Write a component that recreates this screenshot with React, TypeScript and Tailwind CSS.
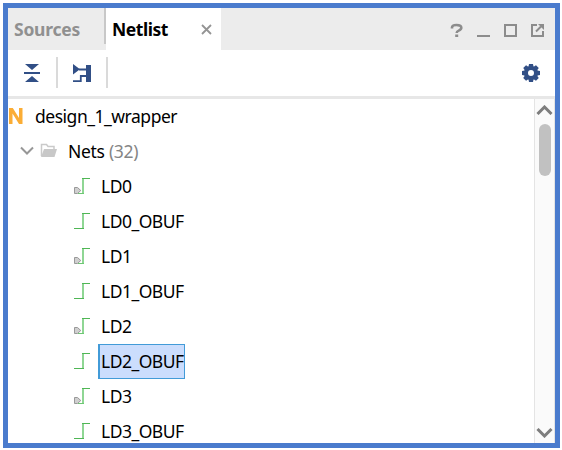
import React from "react";

function NetIcon({ port }: { port: boolean }) {
  return (
    <svg width="18" height="17" viewBox="0 0 18 17" className="shrink-0" shapeRendering="crispEdges">
      <path d="M9 0h2v16H9z" fill="#8fd694" />
      <path d="M9 0h8v1H9zM1 15h10v1H1z" fill="#4fb655" />
      {port && (
        <g shapeRendering="auto">
          <path d="M0 8h9v9H0z" fill="#fff" />
          <path d="M5 15h6v1H5z" fill="#6cc872" />
          <path d="M1.5 9.5h3L7.8 12.5l-3.3 3h-3z" fill="#cfcfcf" stroke="#999" />
        </g>
      )}
    </svg>
  );
}

const nets = ["LD0", "LD0_OBUF", "LD1", "LD1_OBUF", "LD2", "LD2_OBUF", "LD3", "LD3_OBUF"];

function NetRow({ name }: { name: string }) {
  const selected = name === "LD2_OBUF";
  return (
    <div className="flex h-[35px] shrink-0 items-center pl-[65px]">
      <NetIcon port={!name.includes("_")} />
      <span
        className={
          "ml-[7px] flex h-[35px] items-center whitespace-nowrap border pb-[2px] " +
          (name.includes("_") ? "w-[87px] tracking-[-0.52px] " : "tracking-[-0.5px] ") +
          (selected ? "border-[#429bd8] border-l-2 pl-px bg-[#cbddfd]" : "border-transparent pl-[2px]")
        }
      >
        {name}
      </span>
    </div>
  );
}

export default function App() {
  return (
    <div className="h-[450px] w-[562px] overflow-hidden bg-white p-[3px] font-['Noto_Sans',sans-serif] text-[17.5px] leading-[24px] text-black">
      <div className="flex h-[445px] w-[557px] flex-col overflow-hidden border-[5px] border-[#4a7bcd] bg-white">
        <header className="flex h-[42px] shrink-0 bg-[#ececec] font-bold">
          <div className="flex w-[98px] items-start">
            <div className="flex h-[42px] w-[96px] items-center pl-[6px] text-[#909090] tracking-[-0.25px]">Sources</div>
            <div className="h-[36px] w-[2px] bg-[#c8c8c8]" />
          </div>
          <div className="flex w-[115px] items-center bg-white pl-[6px]">
            <span className="w-[89px] tracking-[-0.45px]">Netlist</span>
            <svg width="11" height="11" viewBox="0 0 11 11" fill="none" stroke="#949494" strokeWidth="1.8">
              <path d="M1 1l9 9M10 1L1 10" />
            </svg>
          </div>
          <svg width="110" height="42" viewBox="445 8 110 42" className="ml-auto" fill="none" stroke="#8c8c8c" strokeWidth="2">
            <path d="M452 28.5v-1q0-2.5 4.5-2.5 4.8 0 4.8 2.8 0 1.8-2.6 2.8-2 .8-2 2.4" strokeWidth="2.6" />
            <path d="M455.2 34.5h3v2.5h-3z" fill="#8c8c8c" stroke="none" />
            <path d="M477 35h13v2h-13z" fill="#8c8c8c" stroke="none" />
            <path d="M505 25h11v11h-11z" />
            <path d="M537 25h-5v11h11v-5" />
            <path d="M536 31.5l5-5" />
            <path d="M538 24h6v6z" fill="#8c8c8c" stroke="none" />
          </svg>
        </header>

        <div className="flex h-[46px] shrink-0 items-center">
          <svg width="48" height="46" viewBox="8 50 48 46" fill="#314f86">
            <path d="M25 64h14l-7 6zM24 72h16v2H24zM32 76l7 6H25z" />
          </svg>
          <div className="mt-[-1px] h-[31px] w-[2px] bg-[#dadada]" />
          <svg width="48" height="46" viewBox="58 50 48 46" fill="#314f86">
            <path d="M73 64l7 5.3-7 5.3zM86 65h5v17h-5z" />
            <path d="M79 69.5h8M73 81.2h7.8V76H87" fill="none" stroke="#314f86" strokeWidth="1.8" />
          </svg>
          <div className="mt-[-1px] h-[31px] w-[2px] bg-[#dadada]" />
          <svg width="20" height="20" viewBox="-10 -10 20 20" className="ml-auto mr-[14px]">
            <circle r="5" fill="none" stroke="#314f86" strokeWidth="4" />
            {[0, 45, 90, 135, 180, 225, 270, 315].map((a) => (
              <path key={a} d="M-2-9h4l.7 4h-5.4z" fill="#314f86" transform={`rotate(${a})`} />
            ))}
          </svg>
        </div>
        <div className="h-[3px] shrink-0 bg-[#e7e7e7]" />

        <div className="flex h-[344px] shrink-0">
          <div className="flex h-[344px] min-w-0 flex-1 flex-col overflow-hidden">
            <div className="flex h-[35px] shrink-0 items-center pb-[2px]">
              <svg width="16" height="18" viewBox="0 0 16 18" fill="#fbad35">
                <path d="M1 1h3.8l6.2 10V1h3.5v16H11L4.5 6.5V17H1z" />
              </svg>
              <span className="ml-[11px] whitespace-nowrap tracking-[-0.48px]">design_1_wrapper</span>
            </div>
            <div className="flex h-[35px] shrink-0 items-center pb-[2px] pl-[12px]">
              <svg width="14" height="9" viewBox="0 0 14 9" fill="none" stroke="#979797" strokeWidth="2">
                <path d="M1 1.5l6 6 6-6" />
              </svg>
              <svg width="17" height="15" viewBox="0 0 17 15" className="ml-[6px]">
                <path d="M1.5 13V1.5h5l1.5 2h6V7" fill="none" stroke="#cacaca" strokeWidth="1.5" />
                <path d="M4 6h13l-2.5 8H1z" fill="#c8c8c8" />
              </svg>
              <span className="ml-[11px] whitespace-pre tracking-[-0.3px]">
                Nets <span className="text-[#858585]">(32)</span>
              </span>
            </div>
            {nets.map((n) => (
              <NetRow key={n} name={n} />
            ))}
          </div>
          <div className="flex w-[21px] flex-col items-center border-x border-[#e4e4e4] bg-[#fafafa]">
            <svg width="17" height="10" viewBox="0 0 17 10" className="mt-[6px]" fill="none" stroke="#7d7d7d" strokeWidth="3">
              <path d="M1.5 9l7-7 7 7" />
            </svg>
            <div className="mt-[9px] h-[52px] w-[12px] rounded-full bg-[#c1c1c1]" />
            <svg width="17" height="10" viewBox="0 0 17 10" className="mb-[5px] mt-auto" fill="none" stroke="#7d7d7d" strokeWidth="3">
              <path d="M1.5 1l7 7 7-7" />
            </svg>
          </div>
        </div>
      </div>
    </div>
  );
}
